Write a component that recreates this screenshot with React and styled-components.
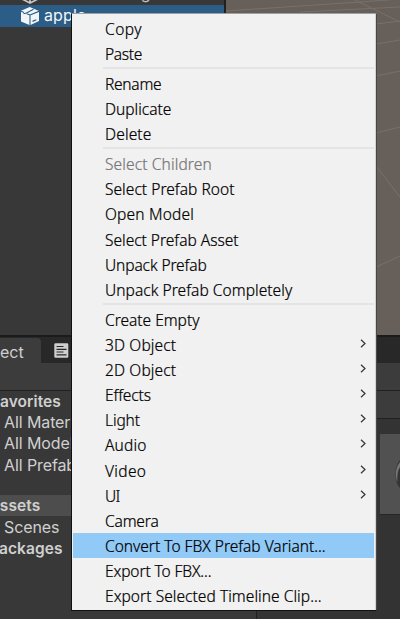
import React from 'react';
import styled, { createGlobalStyle } from 'styled-components';

const GlobalStyle = createGlobalStyle`
  * { box-sizing: border-box; }
  body { margin: 0; background: #383838; overflow: hidden; }
`;

const Editor = styled.div`
  position: relative;
  display: flex;
  flex-direction: column;
  width: 400px;
  height: 619px;
  overflow: hidden;
  background: #383838;
  color: #d0d0d0;
  font: 16px Inter, sans-serif;
`;

const Workspace = styled.div`
  display: flex;
  height: 335px;
`;

const Hierarchy = styled.div`
  width: 226px;
  border-right: 2px solid #202020;
  background: #383838;
`;

const HierarchyRow = styled.div`
  display: flex;
  gap: 5px;
  height: ${(p) => (p.$selected ? '22px' : '5px')};
  padding-left: 21px;
  color: ${(p) => (p.$selected ? '#f2f6fa' : '#c4c4c4')};
  background: ${(p) => (p.$selected ? '#2c5d87' : 'transparent')};
  line-height: 20px;
  overflow: hidden;
  align-items: ${(p) => (p.$selected ? 'center' : 'flex-end')};
`;

const ObjectName = styled.span`
  padding-bottom: 2px;
  letter-spacing: 0.1px;
`;

const ClippedName = styled.span`
  height: 21px;
  line-height: 22px;
  margin-bottom: 2px;
  letter-spacing: -0.1px;
`;

const Scene = styled.svg`
  display: block;
  width: 174px;
  height: 335px;
  background: #675f5a;
`;

const TabBar = styled.div`
  display: flex;
  height: 28px;
  padding-top: 1px;
  background: #282828;
  border-top: 2px solid #1b1b1b;
`;

const Tab = styled.div`
  display: flex;
  align-items: center;
  width: 41px;
  height: 25px;
  padding-top: 3px;
  border-radius: 0 4px 0 0;
  background: #3c3c3c;
  line-height: 22px;
`;

const TabIcon = styled.svg`
  width: 15px;
  height: 15px;
  margin: 5px 0 0 13px;
`;

const Toolbar = styled.div`
  height: 28px;
  background: #3c3c3c;
  border-bottom: 1px solid #202020;
`;

const ProjectBody = styled.div`
  display: flex;
  flex: 1;
`;

const Tree = styled.div`
  width: 257px;
  border-right: 1px solid #202020;
`;

const TreeRow = styled.div`
  display: flex;
  align-items: center;
  height: 21.2px;
  margin-top: ${(p) => p.$gap || 0}px;
  padding-left: ${(p) => (p.$child ? '4px' : '0')};
  font-size: ${(p) => (p.$child ? '16px' : '15.5px')};
  font-weight: ${(p) => (p.$child ? 400 : 600)};
  letter-spacing: ${(p) => (p.$child ? '-0.1px' : '0.1px')};
  background: ${(p) => (p.$active ? '#4d4d4d' : 'transparent')};
  white-space: nowrap;
`;

const Shift = styled.span`
  margin-left: ${(p) => p.$x || 0}px;
`;

const Files = styled.div`
  display: flex;
  flex-direction: column;
  align-items: flex-end;
  flex: 1;
  background: #333;
`;

const Breadcrumb = styled.div`
  width: 100%;
  height: 28px;
  background: #3c3c3c;
  border-bottom: 1px solid #202020;
`;

const Tile = styled.div`
  display: flex;
  align-items: center;
  justify-content: flex-end;
  width: 20px;
  height: 81px;
  margin-top: 15px;
  background: #515151;
  border-bottom: 1px solid #262626;
`;

const Menu = styled.div`
  position: absolute;
  left: 71px;
  top: 13px;
  width: 306px;
  height: 598px;
  padding: 2px 1px;
  border: 1px solid #a0a0a0;
  border-left-color: #111;
  border-bottom-color: #111;
  border-right-color: #4a4744;
  background: #f1f1f1;
  color: #000;
  font: 300 15.5px "Noto Sans", sans-serif;
  -webkit-text-stroke: 0.22px currentColor;
  box-shadow: inset -1px 0 #d2d2d2;
`;

const MenuItem = styled.div`
  display: flex;
  align-items: center;
  justify-content: space-between;
  height: 25.15px;
  margin-right: 1px;
  padding: 2px 8px 0 32px;
  color: ${(p) => (p.$disabled ? '#767676' : 'inherit')};
  background: ${(p) => (p.$highlighted ? '#91c9f7' : 'transparent')};
  letter-spacing: ${(p) => p.$tracking}px;
  line-height: 23px;
  white-space: nowrap;
`;

const Separator = styled.div`
  height: 4.7px;
  margin: 0 1px 0 30px;
  padding-top: 1px;
  &::before {
    content: '';
    display: block;
    height: 1.6px;
    background: #e4e4e4;
  }
`;

const Chevron = styled.svg`
  width: 6px;
  height: 9px;
  margin-top: -4px;
`;

const groups = [
  [['Copy', 0.5], ['Paste', -0.3]],
  [['Rename', -0.25], ['Duplicate', 0], ['Delete', 0.15]],
  [
    ['Select Children', 0.13], ['Select Prefab Root', 0.05], ['Open Model', 0.2],
    ['Select Prefab Asset', 0], ['Unpack Prefab', -0.1], ['Unpack Prefab Completely', 0.06],
  ],
  [
    ['Create Empty', 0], ['3D Object', 0.15], ['2D Object', 0.15], ['Effects', -0.1],
    ['Light', -0.1], ['Audio', 0.2], ['Video', 0.35], ['UI', -0.6], ['Camera', -0.15],
    ['Convert To FBX Prefab Variant...', 0], ['Export To FBX...', -0.1],
    ['Export Selected Timeline Clip...', 0.06],
  ],
];
const submenus = new Set(['3D Object', '2D Object', 'Effects', 'Light', 'Audio', 'Video', 'UI']);

function PrefabIcon() {
  return (
    <svg width="18" height="20" viewBox="0 0 18 20">
      <path d="M0 4.8 8.7 1 18 4.9V15l-9 4.2L0 15.5Z" fill="#f1f5f8" />
      <path d="M9 9v10.5M9 9l9-3.7M9 9 5.8 7.8M0 5.2l3 1.3M2.5 7.8 5.5 7l7-3.8" stroke="#2c5d87" strokeWidth="1.1" fill="none" />
      <path d="m11.5 15.4 3.8-1.7" stroke="#2c5d87" strokeWidth="1.2" fill="none" />
    </svg>
  );
}

export default function App() {
  return (
    <>
      <GlobalStyle />
      <Editor>
        <Workspace>
          <Hierarchy>
            <HierarchyRow>
              <svg width="18" height="5" viewBox="0 0 18 5"><path d="m1-1 8 4 8-4M9-2v5" stroke="#c8c8c8" strokeWidth="1.6" fill="none" /></svg>
              <ClippedName>Directional Light</ClippedName>
            </HierarchyRow>
            <HierarchyRow $selected><PrefabIcon /><ObjectName>apple</ObjectName></HierarchyRow>
          </Hierarchy>
          <Scene viewBox="226 0 174 335">
            <g stroke="#77716c" strokeWidth="1" fill="none">
              <path d="M226 11 360 2 400-1M300 12 400 7M376 24l24-3M376 44l24-4M376 76l24-5M376 133l24-6M355 0l45 22M376 166l24 31M376 267l24-11" />
            </g>
          </Scene>
        </Workspace>
        <TabBar>
          <Tab>ect</Tab>
          <TabIcon viewBox="0 0 15 15">
            <rect x=".3" y=".3" width="14" height="14.4" rx="1.2" fill="#cecece" />
            <path d="M2.5 3.5h7M2.5 6.3h10M2.5 9h7M2.5 11.8h10" stroke="#282828" strokeWidth="1.2" />
          </TabIcon>
        </TabBar>
        <Toolbar />
        <ProjectBody>
          <Tree>
            <TreeRow $gap={-0.6}><Shift $x={-9}>Favorites</Shift></TreeRow>
            <TreeRow $child>All Materials</TreeRow>
            <TreeRow $child>All Models</TreeRow>
            <TreeRow $child>All Prefabs</TreeRow>
            <TreeRow $active $gap={20}><Shift $x={-11.5}>Assets</Shift></TreeRow>
            <TreeRow $child>Scenes</TreeRow>
            <TreeRow><Shift $x={-11}>Packages</Shift></TreeRow>
          </Tree>
          <Files>
            <Breadcrumb />
            <Tile>
              <svg width="5" height="28" viewBox="0 0 5 28"><path d="M5 0C-1 7-1 22 5 28Z" fill="#343434" /><path d="M5 2C0 8 0 17 2.5 22Q1.5 12 5 7Z" fill="#777" /></svg>
            </Tile>
          </Files>
        </ProjectBody>
        <Menu>
          {groups.map((group, i) => (
            <React.Fragment key={i}>
              {i > 0 && <Separator />}
              {group.map(([label, tracking]) => (
                <MenuItem
                  key={label}
                  $tracking={tracking}
                  $disabled={label === 'Select Children'}
                  $highlighted={label.startsWith('Convert')}
                >
                  {label}
                  {submenus.has(label) && (
                    <Chevron viewBox="0 0 6 9"><path d="m1 .7 4 3.8-4 3.8" stroke="#333" strokeWidth="1.2" fill="none" /></Chevron>
                  )}
                </MenuItem>
              ))}
            </React.Fragment>
          ))}
        </Menu>
      </Editor>
    </>
  );
}
